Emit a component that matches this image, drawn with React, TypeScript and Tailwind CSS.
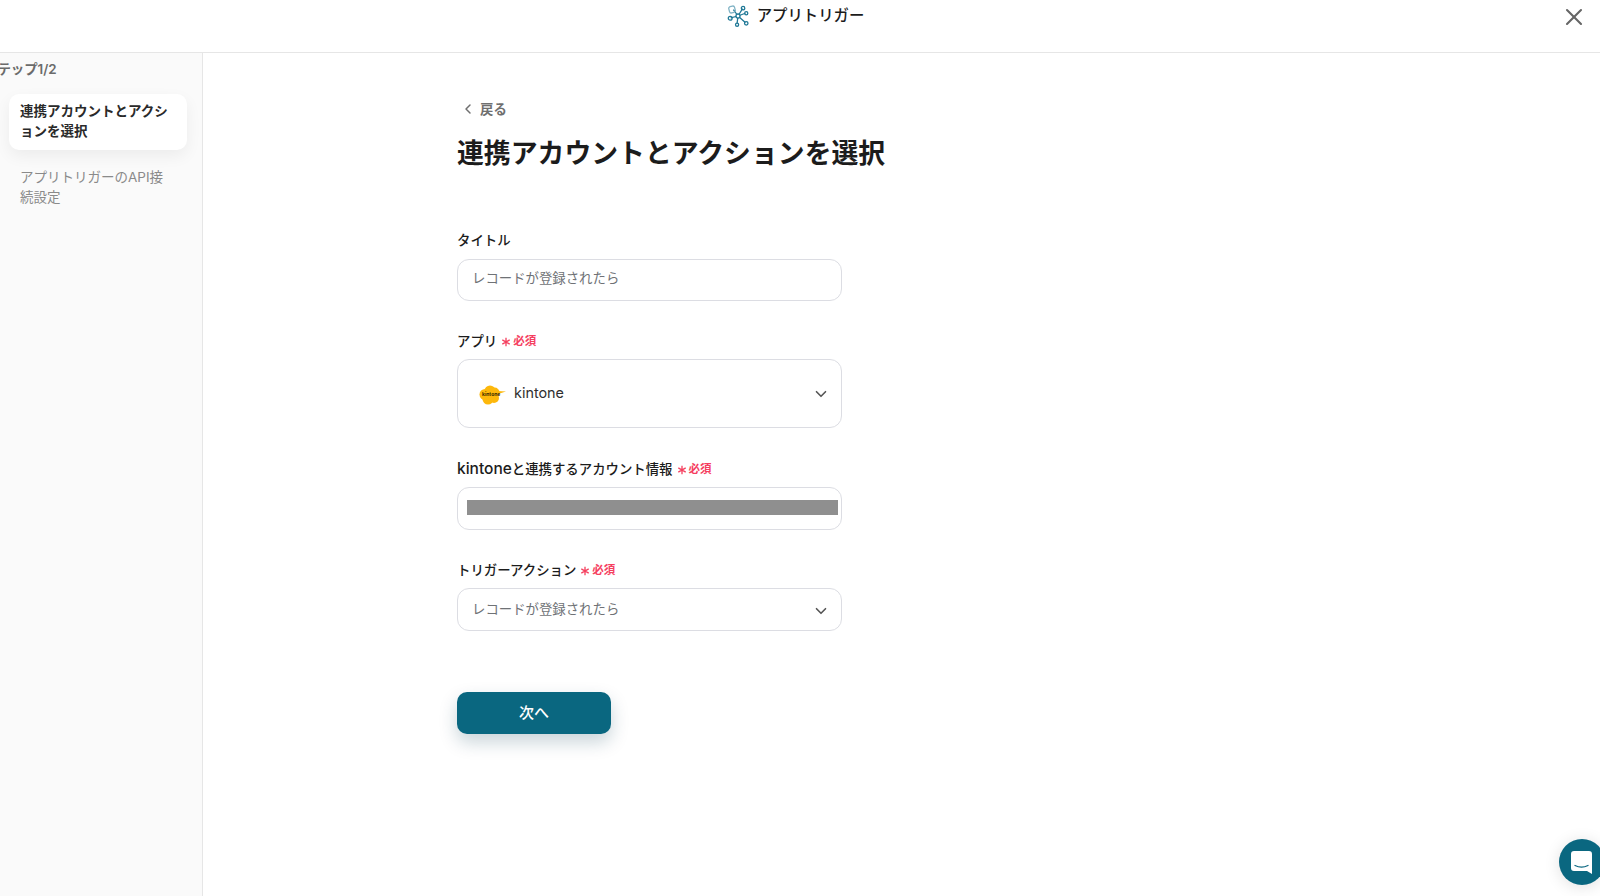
import React from 'react';
import { ChevronDown, ChevronLeft, X } from 'lucide-react';

const FONT = "font-['Inter','Noto_Sans_CJK_JP',sans-serif]";

const AppTriggerIcon = () => (
  <svg width="22" height="22" viewBox="0 0 24 24" fill="none" stroke="#1f7896" strokeWidth="1.4">
    <path d="M12 12 7 5M12 12l5-8M12 12l8-3M12 12l-8 2M12 12l8 7M12 12l-1 8" />
    <rect x="2" y="1.500" width="6.500" height="7" rx="2" stroke="#7fb2c4" transform="rotate(-15 5 4)" />
    <circle cx="17.500" cy="3.500" r="1.900" />
    <circle cx="21" cy="9" r="1.700" />
    <circle cx="3.500" cy="14.500" r="2.100" />
    <circle cx="21" cy="20" r="1.900" />
    <circle cx="11" cy="21.500" r="1.700" />
    <circle cx="12" cy="12" r="2.200" fill="#fff" />
  </svg>
);

const KintoneLogo = () => (
  <div className="relative w-[27px] h-[20px] shrink-0 translate-y-[1px]">
    <svg width="27" height="20" viewBox="0 0 27 20" fill="#fdb80c">
      <circle cx="6" cy="9.500" r="5.500" />
      <circle cx="11" cy="6" r="5.500" />
      <circle cx="15.500" cy="7.500" r="5" />
      <circle cx="15" cy="13" r="5" />
      <circle cx="9" cy="14" r="5.500" />
      <path d="M18 6 27 6.500 19 9Z" />
    </svg>
    <span className="absolute left-[3px] top-[6px] text-[5px] leading-[7px] font-bold text-[#3a2c00]">kintone</span>
  </div>
);

const Required = () => (
  <span className="ml-1 mt-[2px] inline-flex items-center text-[11.5px] font-semibold text-[#f5405f]">
    <svg width="10" height="10" viewBox="0 0 10 10" stroke="#f5405f" strokeWidth="1.3" className="mr-[2px]">
      <path d="M5 .8v8.400M1.300 2.900l7.400 4.200M8.700 2.900 1.300 7.100" />
    </svg>
    必須
  </span>
);

const FieldLabel: React.FC<{ children: React.ReactNode; required?: boolean; className?: string }> = ({
  children,
  required,
  className = 'mb-[9px]'
}) => (
  <div className={`flex items-center h-[20px] pt-[2px] text-[13.4px] font-medium text-[#1c1c1c] ${className}`}>
    {children}
    {required && <Required />}
  </div>
);

const boxClass = 'w-[385px] rounded-[12px] border border-[#dcdde3] bg-white';

export default function App() {
  return (
    <div className={`${FONT} h-[896px] w-[1600px] overflow-hidden bg-white relative`}>
      <header className="relative h-[53px] border-b border-[#e6e6e6] flex justify-center pt-[5px] pr-[9px]">
        <div className="flex items-start gap-[8px] h-[24px]">
          <AppTriggerIcon />
          <span className="text-[15.4px] leading-[21px] font-medium text-[#1c1c1c]">アプリトリガー</span>
        </div>
        <button className="absolute right-[12px] top-[3px] text-[#666666]">
          <X size={28} strokeWidth={1.8} />
        </button>
      </header>

      <div className="flex h-[843px]">
        <aside className="w-[203px] shrink-0 bg-[#fafafa] border-r border-[#e6e6e6] pt-[6px]">
          <div className="-ml-[16px] whitespace-nowrap text-[13.4px] leading-[20px] font-semibold text-[#6b6b6b]">
            ステップ1/2
          </div>
          <div className="mt-[15px] ml-[9px] w-[178px] rounded-[10px] bg-white shadow-[0_6px_16px_rgba(0,0,0,0.06)] px-[11px] pt-[7px] pb-[9px] text-[13.5px] leading-[20px] font-semibold text-[#2a2a2a]">
            連携アカウントとアクションを選択
          </div>
          <div className="mt-[17px] ml-[20px] w-[150px] text-[13.5px] leading-[20px] text-[#8a8a8a]">
            アプリトリガーのAPI接続設定
          </div>
        </aside>

        <main className="flex-1 pl-[254px] pt-[46px]">
          <button className="flex items-center h-[20px] text-[13.4px] font-semibold text-[#6f6f6f]">
            <ChevronLeft size={16} strokeWidth={2.2} className="ml-[3px] mr-[4px]" />
            戻る
          </button>
          <h1 className="mt-[14px] h-[40px] text-[26.85px] leading-[40px] font-semibold text-[#1c1c1c] whitespace-nowrap">
            連携アカウントとアクションを選択
          </h1>

          <div className="mt-[56px]">
            <FieldLabel className="mb-[10px]">タイトル</FieldLabel>
            <div className={`${boxClass} h-[42px] flex items-center px-[14px] pb-[3px] text-[13.4px] text-[#6f7276]`}>
              レコードが登録されたら
            </div>
          </div>

          <div className="mt-[29px]">
            <FieldLabel required>アプリ</FieldLabel>
            <div className={`${boxClass} h-[69px] flex items-center pl-[21px] pr-[11px]`}>
              <KintoneLogo />
              <span className="ml-[8px] -translate-y-[1px] text-[14.4px] text-[#2f2f2f]">kintone</span>
              <ChevronDown size={18} strokeWidth={2.2} className="ml-auto text-[#555555]" />
            </div>
          </div>

          <div className="mt-[30px]">
            <FieldLabel required>
              <span className="text-[15.5px]">kintone</span>と連携するアカウント情報
            </FieldLabel>
            <div className={`${boxClass} h-[43px] flex items-center pl-[9px] pr-[3px]`}>
              <div className="h-[15px] w-full bg-[#8f8f8f] -translate-y-[1px]" />
            </div>
          </div>

          <div className="mt-[29px]">
            <FieldLabel required>トリガーアクション</FieldLabel>
            <div className={`${boxClass} h-[43px] flex items-center pl-[14px] pr-[11px] text-[13.4px] text-[#6f7276]`}>
              <span>レコードが登録されたら</span>
              <ChevronDown size={18} strokeWidth={2.2} className="ml-auto translate-y-[1px] text-[#555555]" />
            </div>
          </div>

          <button className="mt-[61px] h-[42px] w-[154px] rounded-[10px] bg-[#0a6780] text-white text-[15px] font-medium shadow-[0_8px_18px_rgba(10,60,80,0.22)]">
            次へ
          </button>
        </main>
      </div>

      <button className="absolute left-[1559px] top-[839px] h-[46px] w-[46px] rounded-full bg-[#0a6780] flex items-center justify-center shadow-[0_2px_16px_rgba(0,0,0,0.12)]">
        <svg width="21" height="23" viewBox="0 0 21 23" className="-translate-x-[1px]">
          <path d="M3 0h15a3 3 0 0 1 3 3v20l-5-3H3a3 3 0 0 1-3-3V3a3 3 0 0 1 3-3Z" fill="#fff" />
          <path d="M4 14.500c4 2 9 2 13 0" fill="none" stroke="#0a6780" strokeWidth="1.300" strokeLinecap="round" />
        </svg>
      </button>
    </div>
  );
}
